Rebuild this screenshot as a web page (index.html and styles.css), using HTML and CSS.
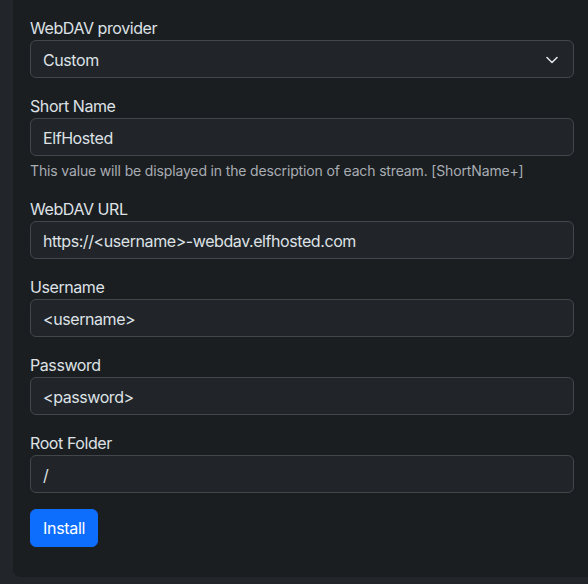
FILE: index.html
```html
<!DOCTYPE html>
<html lang="en">
<head>
<meta charset="utf-8">
<link rel="stylesheet" href="styles.css">
</head>
<body>
<div class="card">
  <form class="form">
    <div class="field">
      <label class="label">WebDAV provider</label>
      <div class="select">
        <span>Custom</span>
        <svg class="chev" width="12" height="8" viewBox="0 0 12 8"><path d="M1 1.5l5 5 5-5" fill="none" stroke="#dee2e6" stroke-width="1.6" stroke-linecap="round" stroke-linejoin="round"/></svg>
      </div>
    </div>
    <div class="field">
      <label class="label">Short Name</label>
      <div class="input">ElfHosted</div>
      <div class="help">This value will be displayed in the description of each stream. [ShortName+]</div>
    </div>
    <div class="field">
      <label class="label">WebDAV URL</label>
      <div class="input">https://&lt;username&gt;-webdav.elfhosted.com</div>
    </div>
    <div class="field">
      <label class="label">Username</label>
      <div class="input">&lt;username&gt;</div>
    </div>
    <div class="field">
      <label class="label">Password</label>
      <div class="input">&lt;password&gt;</div>
    </div>
    <div class="field">
      <label class="label">Root Folder</label>
      <div class="input">/</div>
    </div>
    <div class="actions"><button type="button" class="btn">Install</button></div>
  </form>
</div>
</body>
</html>
```
FILE: styles.css
```css
html, body {
  margin: 0;
  padding: 0;
  background: #222529;
  height: 584px;
  overflow: hidden;
}
body {
  font-family: Inter, "Liberation Sans", sans-serif;
  color: #dee2e6;
  font-size: 16px;
  line-height: 24px;
  letter-spacing: -0.42px;
}
.card {
  margin-left: 13px;
  width: 593px;
  box-sizing: border-box;
  background: #1b1e21;
  border-radius: 0 0 8px 8px;
  padding: 16px 16px 30px 17px;
}
.form { width: 544px; }
.field { margin-bottom: 16px; }
.label {
  display: block;
  margin-bottom: 0;
  height: 24px;
}
.input, .select {
  height: 38px;
  box-sizing: border-box;
  border: 1px solid #43474c;
  border-radius: 6px;
  background: #212529;
  padding: 7px 12px 5px;
  color: #dee2e6;
}
.select {
  display: flex;
  align-items: center;
  justify-content: space-between;
  padding-right: 15px;
}
.chev { width: 12px; height: 8px; }
.help {
  margin-top: 4px;
  font-size: 14px;
  line-height: 21px;
  color: #a8adb3;
  letter-spacing: -0.15px;
}
.actions { padding-top: 0; }
.btn {
  font-family: inherit;
  font-size: 16px;
  line-height: 24px;
  letter-spacing: -0.3px;
  color: #fff;
  background: #0d6efd;
  border: 1px solid #0d6efd;
  border-radius: 6px;
  padding: 6px 12px;
  height: 38px;
}
```
